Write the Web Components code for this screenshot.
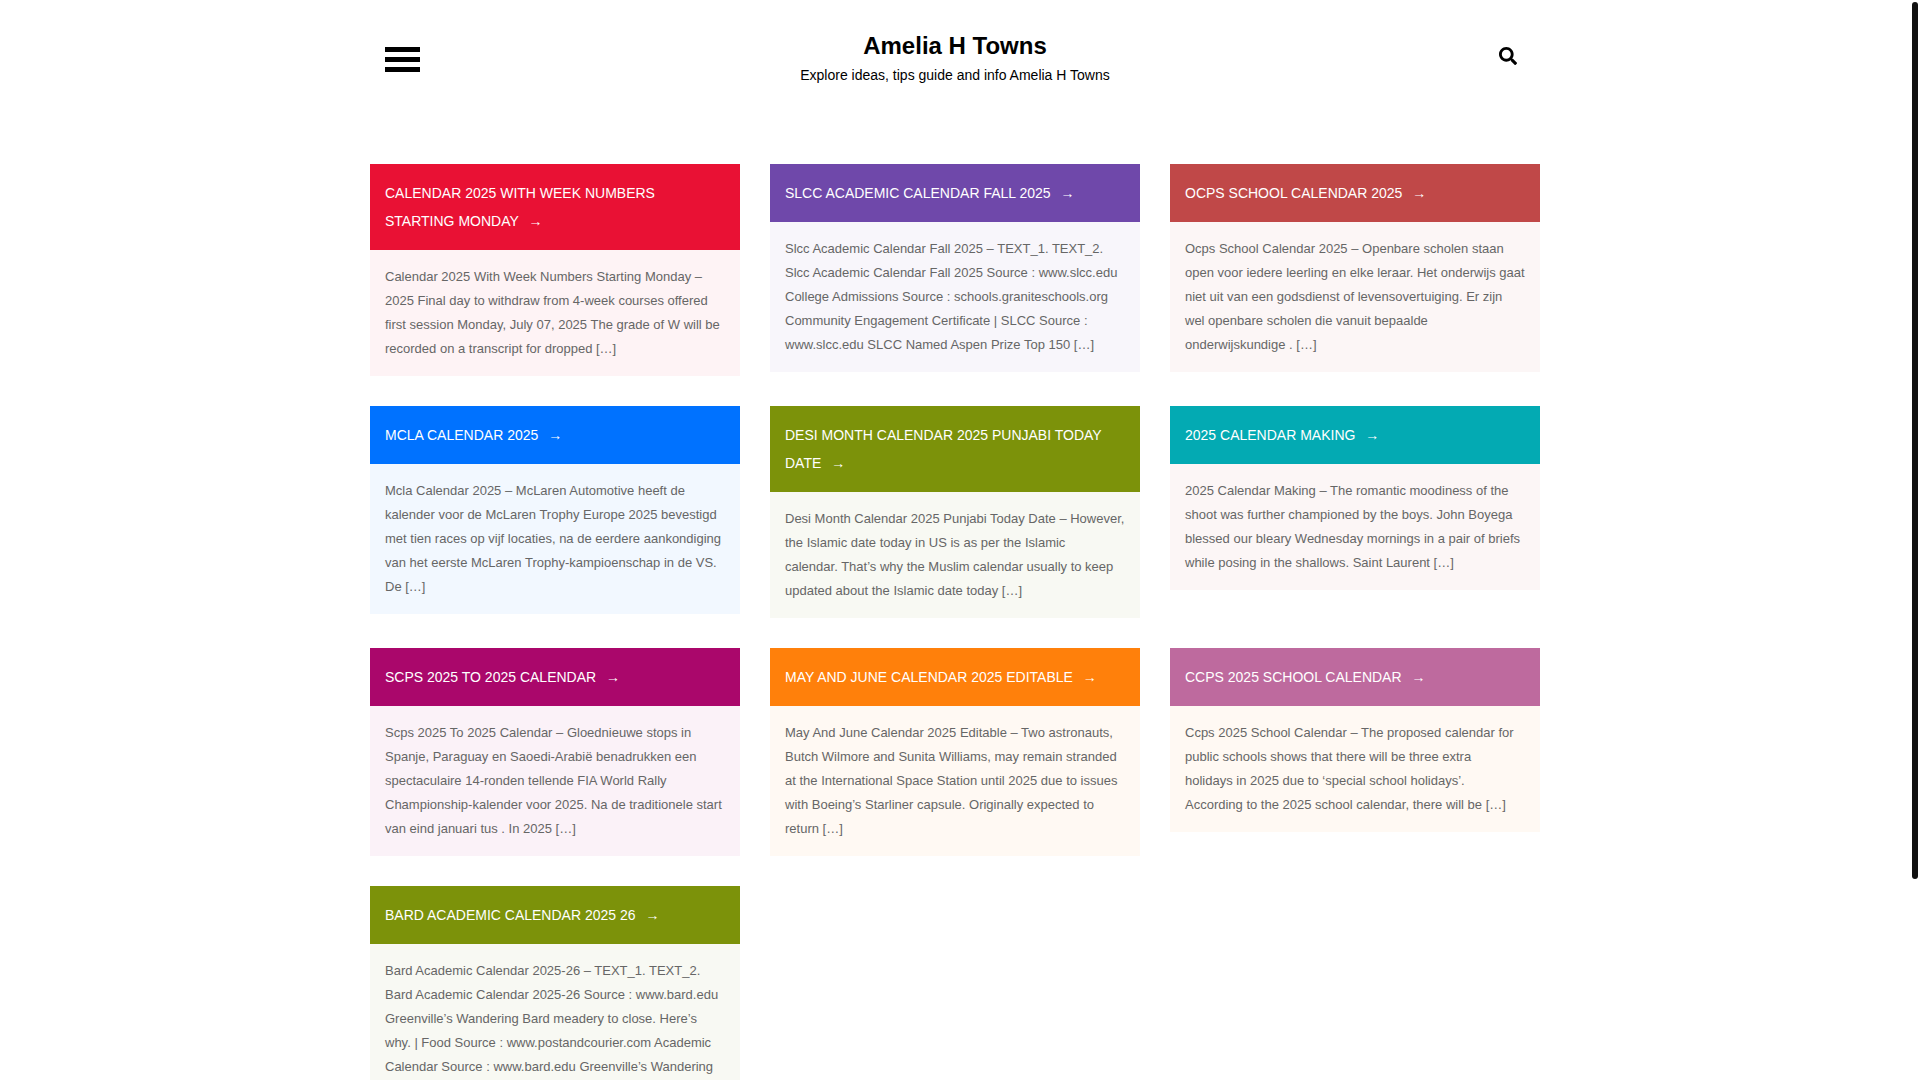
<!DOCTYPE html>
<html lang="en">
<head>
<meta charset="utf-8">
<title>Amelia H Towns</title>
<style>
  body { margin: 0; background: #fff; font-family: "Liberation Sans", Arial, sans-serif; }
</style>
</head>
<body>
<page-shell>
  <site-header>
    <a slot="title" href="#">Amelia H Towns</a>
    <span slot="tagline">Explore ideas, tips guide and info Amelia H Towns</span>
  </site-header>
  <post-grid>
    <post-card style="--head:#e91134;--body:#fef3f5"><span slot="title">Calendar 2025 With Week Numbers Starting Monday</span>Calendar 2025 With Week Numbers Starting Monday – 2025 Final day to withdraw from 4-week courses offered first session Monday, July 07, 2025 The grade of W will be recorded on a transcript for dropped […]</post-card>
    <post-card style="--head:#6f48aa;--body:#f8f6fb"><span slot="title">Slcc Academic Calendar Fall 2025</span>Slcc Academic Calendar Fall 2025 – TEXT_1. TEXT_2. Slcc Academic Calendar Fall 2025 Source : www.slcc.edu College Admissions Source : schools.graniteschools.org Community Engagement Certificate | SLCC Source : www.slcc.edu SLCC Named Aspen Prize Top 150 […]</post-card>
    <post-card style="--head:#c04848;--body:#fcf6f6"><span slot="title">Ocps School Calendar 2025</span>Ocps School Calendar 2025 – Openbare scholen staan open voor iedere leerling en elke leraar. Het onderwijs gaat niet uit van een godsdienst of levensovertuiging. Er zijn wel openbare scholen die vanuit bepaalde onderwijskundige . […]</post-card>
    <post-card style="--head:#0072ff;--body:#f2f8ff"><span slot="title">Mcla Calendar 2025</span>Mcla Calendar 2025 – McLaren Automotive heeft de kalender voor de McLaren Trophy Europe 2025 bevestigd met tien races op vijf locaties, na de eerdere aankondiging van het eerste McLaren Trophy-kampioenschap in de VS. De […]</post-card>
    <post-card style="--head:#7c920a;--body:#f8f9f3"><span slot="title">Desi Month Calendar 2025 Punjabi Today Date</span>Desi Month Calendar 2025 Punjabi Today Date – However, the Islamic date today in US is as per the Islamic<br>calendar. That’s why the Muslim calendar usually to keep updated about the Islamic date today […]</post-card>
    <post-card style="--head:#03aab3;--body:#fcf6f6"><span slot="title">2025 Calendar Making</span>2025 Calendar Making – The romantic moodiness of the shoot was further championed by the boys. John Boyega blessed our bleary Wednesday mornings in a pair of briefs while posing in the shallows. Saint Laurent […]</post-card>
    <post-card style="--head:#aa076b;--body:#fbf2f8"><span slot="title">Scps 2025 To 2025 Calendar</span>Scps 2025 To 2025 Calendar – Gloednieuwe stops in Spanje, Paraguay en Saoedi-Arabië benadrukken een spectaculaire 14-ronden tellende FIA World Rally Championship-kalender voor 2025. Na de traditionele start van eind januari tus . In 2025 […]</post-card>
    <post-card style="--head:#ff800b;--body:#fff9f3"><span slot="title">May And June Calendar 2025 Editable</span>May And June Calendar 2025 Editable – Two astronauts, Butch Wilmore and Sunita Williams, may remain stranded at the International Space Station until 2025 due to issues with Boeing’s Starliner capsule. Originally expected to return […]</post-card>
    <post-card style="--head:#be6a9e;--body:#fff9f3"><span slot="title">Ccps 2025 School Calendar</span>Ccps 2025 School Calendar – The proposed calendar for public schools shows that there will be three extra<br>holidays in 2025 due to ‘special school holidays’.<br>According to the 2025 school calendar, there will be […]</post-card>
    <post-card style="--head:#7c920a;--body:#f8f9f3"><span slot="title">Bard Academic Calendar 2025 26</span>Bard Academic Calendar 2025-26 – TEXT_1. TEXT_2. Bard Academic Calendar 2025-26 Source : www.bard.edu Greenville’s Wandering Bard meadery to close. Here’s why. | Food Source : www.postandcourier.com Academic Calendar Source : www.bard.edu Greenville’s Wandering</post-card>
  </post-grid>
</page-shell>

<script>
function define(name, html) {
  const template = document.createElement('template');
  template.innerHTML = html;
  customElements.define(name, class extends HTMLElement {
    constructor() {
      super();
      this.attachShadow({ mode: 'open' }).append(template.content.cloneNode(true));
    }
  });
}

// Scrolling viewport with a slim rail beside it
define('page-shell', `
  <style>
    :host { display: flex; height: 100vh; }
    main { flex: 1; min-width: 0; overflow-y: auto; scrollbar-width: none; }
  </style>
  <main><slot></slot></main>
  <scroll-rail aria-hidden="true"></scroll-rail>
`);

define('scroll-rail', `
  <style>
    :host { display: flex; flex-direction: column; box-sizing: border-box; width: 10px; padding: 2px; }
    .thumb { flex: 22; background: #111; border-radius: 3px; }
    .rest { flex: 5; }
  </style>
  <div class="thumb"></div><div class="rest"></div>
`);

define('site-header', `
  <style>
    :host { display: block; box-sizing: border-box; max-width: 1170px; margin: 0 auto; padding: 30px 15px 76px; color: #000; }
    header { display: grid; grid-template-columns: 1fr auto 1fr; align-items: start; }
    button { border: 0; background: none; color: inherit; cursor: pointer; }
    .menu { display: flex; flex-direction: column; gap: 5px; width: 35px; padding: 0; margin-top: 17px; }
    .menu i { height: 5px; background: #000; }
    .search { justify-self: end; padding: 0 8px; margin-top: 17px; }
    svg { display: block; width: 18px; height: 18px; fill: currentColor; }
    .brand { text-align: center; }
    h1 { margin: 0; font-size: 24px; line-height: 32px; }
    p { margin: 0; font-size: 14px; line-height: 26px; }
    ::slotted(a) { color: inherit; text-decoration: none; }
  </style>
  <header>
    <button class="menu" aria-label="Menu"><i></i><i></i><i></i></button>
    <div class="brand">
      <h1><slot name="title"></slot></h1>
      <p><slot name="tagline"></slot></p>
    </div>
    <button class="search" aria-label="Search">
      <svg viewBox="0 0 512 512"><path d="M505 442.700 405.300 343c-4.500-4.500-10.600-7-17-7H372c27.600-35.300 44-79.700 44-128C416 93.100 322.900 0 208 0S0 93.100 0 208s93.100 208 208 208c48.300 0 92.700-16.400 128-44v16.300c0 6.400 2.500 12.500 7 17l99.700 99.700c9.400 9.400 24.600 9.400 33.900 0l28.300-28.300c9.400-9.400 9.400-24.600.1-34zM208 336c-70.700 0-128-57.200-128-128 0-70.700 57.200-128 128-128 70.700 0 128 57.200 128 128 0 70.700-57.200 128-128 128z"/></svg>
    </button>
  </header>
`);

define('post-grid', `
  <style>
    :host { display: grid; grid-template-columns: repeat(3, minmax(0, 1fr)); gap: 30px; align-items: start; max-width: 1170px; margin: 0 auto; padding-bottom: 30px; }
  </style>
  <slot></slot>
`);

define('post-card', `
  <style>
    :host { display: block; background: var(--body); }
    h2 { margin: 0; padding: 15px; background: var(--head); font-size: 14px; font-weight: 400; line-height: 28px; text-transform: uppercase; }
    a { color: #fff; text-decoration: none; }
    .arrow { margin-left: 6px; }
    p { margin: 0; padding: 15px; color: #666; font-size: 13px; line-height: 24px; }
  </style>
  <article>
    <h2><a href="#"><slot name="title"></slot> <span class="arrow">→</span></a></h2>
    <p><slot></slot></p>
  </article>
`);
</script>
</body>
</html>
